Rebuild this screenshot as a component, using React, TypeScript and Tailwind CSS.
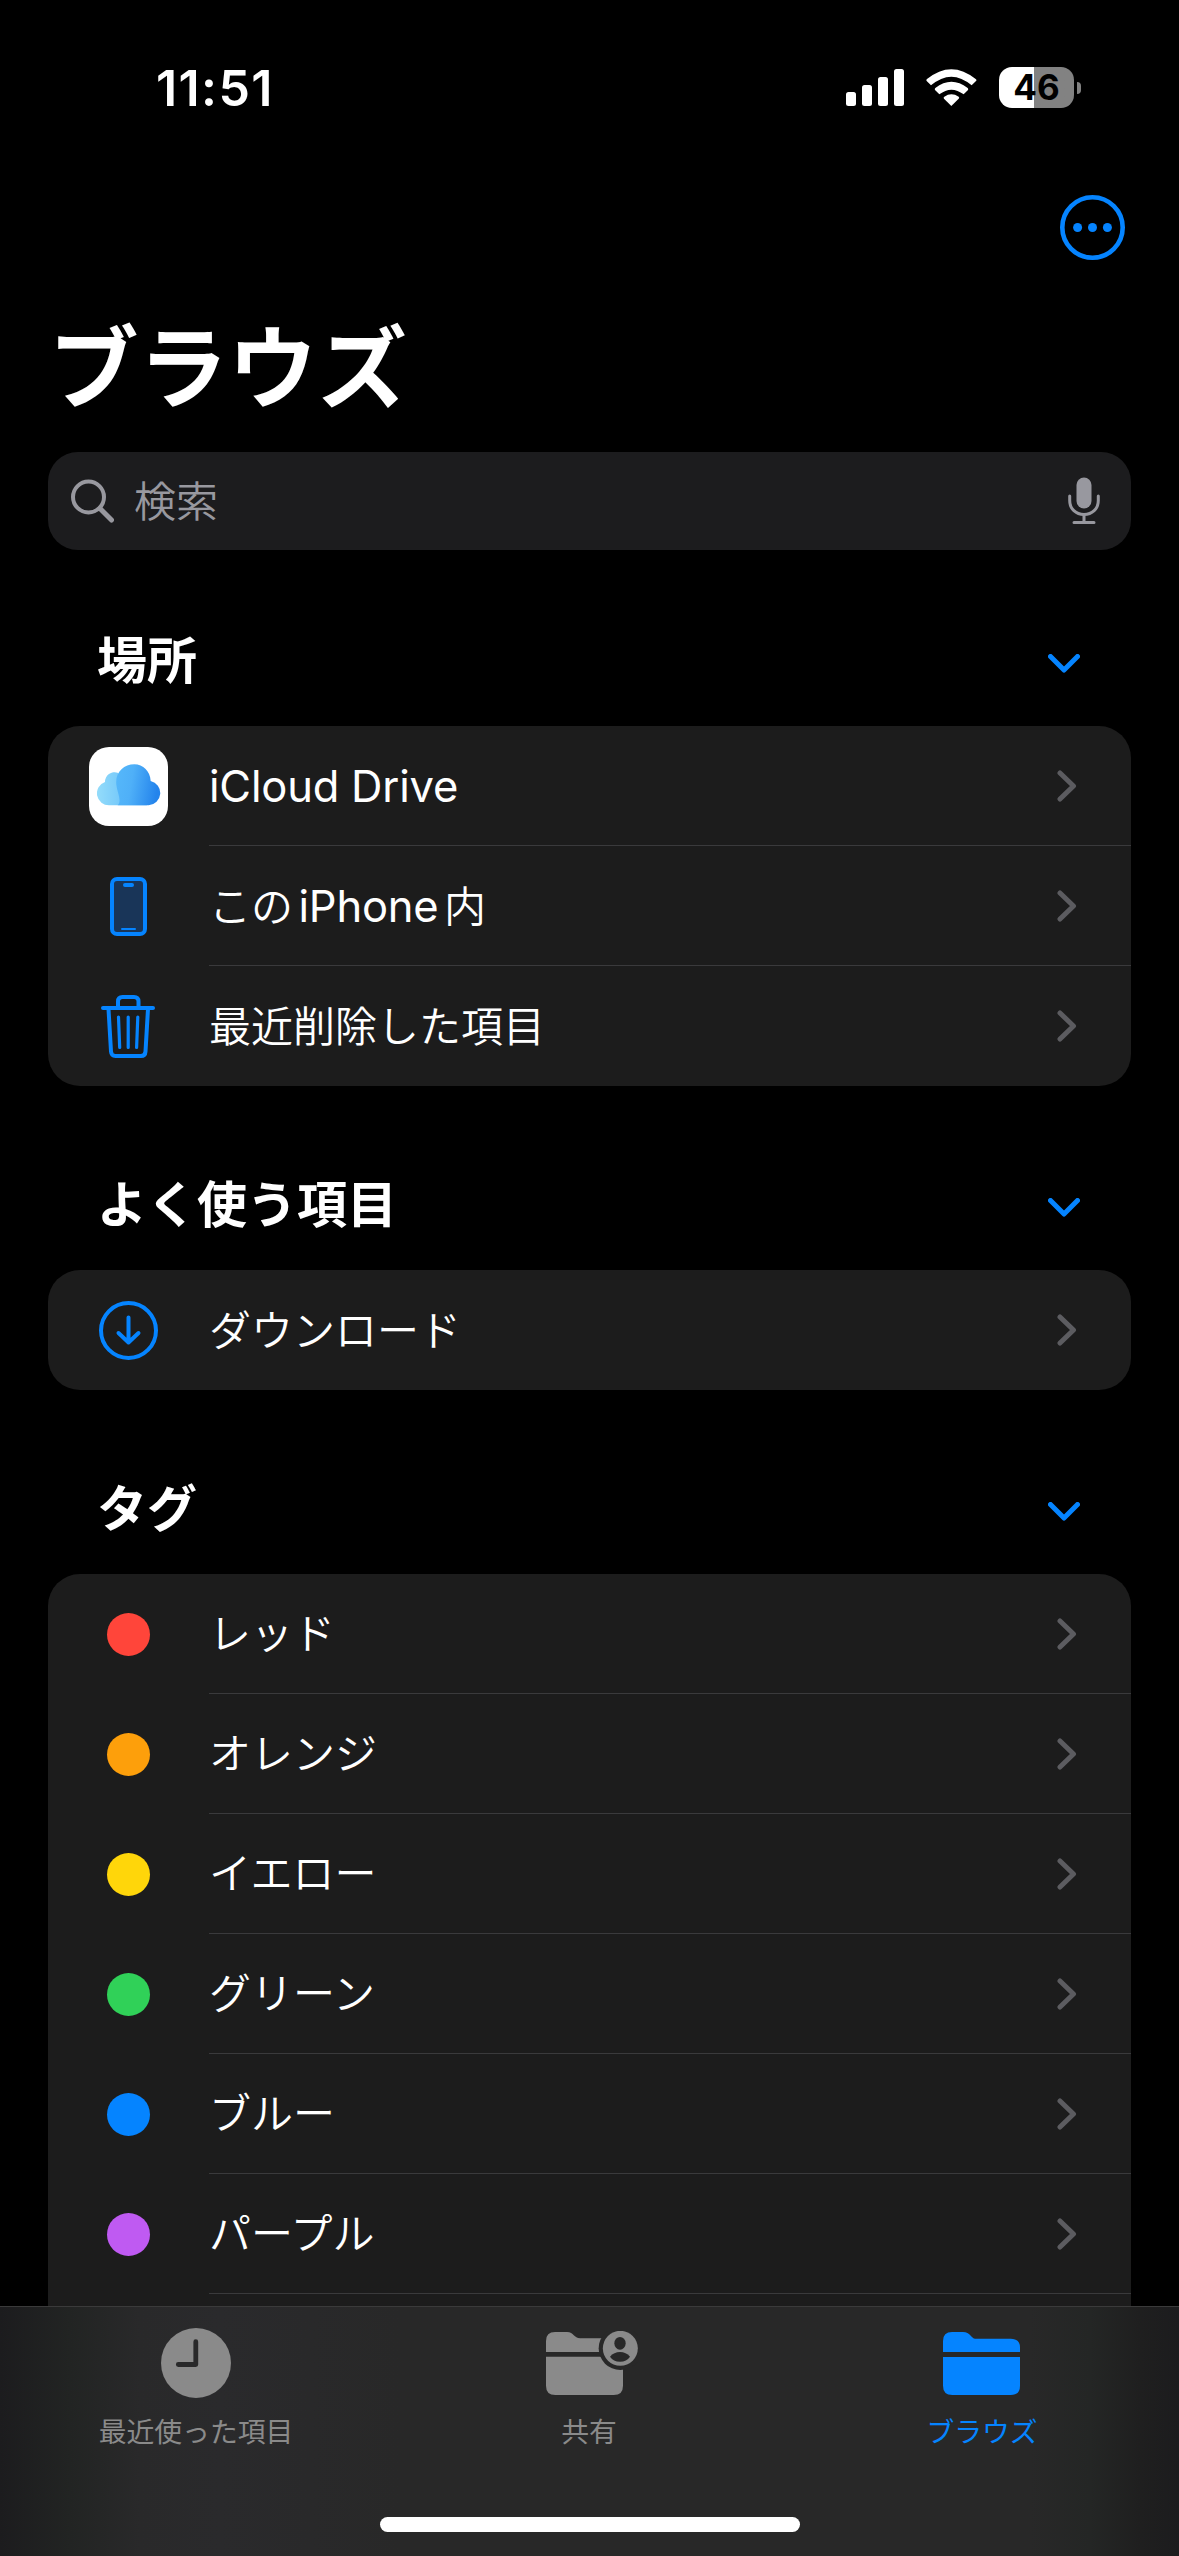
import type { ReactNode } from "react";

type Row = {
  label: ReactNode;
  icon: ReactNode;
};

const ICloudIcon = () => (
  <div className="flex size-[79px] items-center justify-center rounded-[20px] bg-white">
    <svg width="64" height="42" viewBox="0 0 192 126" className="-mt-[2px]">
      <defs>
        <linearGradient id="cloud-back" x1="0" x2="1" y1="0" y2="0">
          <stop offset="0" stopColor="#94dcfa" />
          <stop offset="0.5" stopColor="#74c8fa" />
          <stop offset="1" stopColor="#50b0f8" />
        </linearGradient>
        <linearGradient id="cloud-front" x1="0" x2="1" y1="0" y2="0.15">
          <stop offset="0" stopColor="#56b8fa" />
          <stop offset="0.4" stopColor="#4fb0f8" />
          <stop offset="1" stopColor="#2484ec" />
        </linearGradient>
      </defs>
      <path
        d="M150 124H37a36 36 0 0 1-13-70A29 29 0 0 1 62 26Z"
        fill="url(#cloud-back)"
      />
      <path
        d="M62 124C76 110 60 84 58 62C54 26 80 1 112 1C138 1 160 22 161 51A37 37 0 0 1 155 124Z"
        fill="url(#cloud-front)"
      />
    </svg>
  </div>
);

const PhoneIcon = () => (
  <svg width="37" height="59" viewBox="0 0 37 59" fill="none">
    <rect x="2" y="2" width="33" height="55" rx="5" fill="#193558" stroke="#0584ff" strokeWidth="4" />
    <rect x="13" y="6" width="11" height="4" rx="2" fill="#0584ff" />
    <rect x="11" y="51" width="15" height="2" rx="1" fill="#0584ff" />
  </svg>
);

const TrashIcon = () => (
  <svg
    width="54"
    height="63"
    viewBox="0 0 54 63"
    fill="none"
    stroke="#0584ff"
    strokeWidth="4"
    strokeLinecap="round"
    className="mr-px"
  >
    <path d="M2 13H52" />
    <path d="M17 12V6.500Q17 2 21.500 2H33Q37.500 2 37.500 6.500V12" />
    <path d="M7.500 14L10 56.500Q10.300 61 14.500 61H40Q44.200 61 44.500 56.500L47 14" />
    <path d="M17.500 22L18.700 52.500M27.200 22V52.500M36.800 22L35.600 52.500" strokeWidth="3.200" />
  </svg>
);

const DownloadIcon = () => (
  <svg
    width="59"
    height="59"
    viewBox="0 0 59 59"
    fill="none"
    stroke="#0584ff"
    strokeWidth="4"
    strokeLinecap="round"
    strokeLinejoin="round"
  >
    <circle cx="29.500" cy="29.500" r="27.500" />
    <path d="M29.500 16.500V41.500M19.500 32L29.500 41.500L39.500 32" />
  </svg>
);

const Dot = ({ color }: { color: string }) => (
  <div className={`size-[43px] rounded-full ${color}`} />
);

const ChevronRight = () => (
  <svg width="20" height="32" viewBox="0 0 20 32" fill="none">
    <path
      d="M3 3L16.500 16L3 29"
      stroke="#5c5c60"
      strokeWidth="5"
      strokeLinecap="round"
      strokeLinejoin="round"
    />
  </svg>
);

const ChevronDown = () => (
  <svg width="32" height="19" viewBox="0 0 32 19" fill="none">
    <path
      d="M2.500 2.500L16 16L29.500 2.500"
      stroke="#0584ff"
      strokeWidth="5"
      strokeLinecap="round"
      strokeLinejoin="round"
    />
  </svg>
);

const StatusBar = () => (
  <header className="flex h-[176px] shrink-0 items-start justify-between pl-[156px] pr-[98px]">
    <div className="mt-[58px] text-[50px] font-semibold leading-[60px] tracking-[1.4px]">
      11:51
    </div>
    <div className="mt-[67px] flex h-[41px] items-center">
      <svg width="58" height="37" viewBox="0 0 58 37" fill="#fff">
        <rect x="0" y="23" width="10" height="14" rx="2.500" />
        <rect x="16" y="16" width="10" height="21" rx="2.500" />
        <rect x="32" y="8" width="10" height="29" rx="2.500" />
        <rect x="48" y="0" width="10" height="37" rx="2.500" />
      </svg>
      <svg width="51" height="37" viewBox="0 0 153 111" fill="#fff" className="ml-[22px]">
        <path d="M76 111L54 89Q51 86 55 83Q76 69 98 83Q101 86 98 89Z" />
        <path d="M40 76L27 63Q25 60 28 57Q76 20 125 57Q128 60 126 63L113 76Q76 48 40 76Z" />
        <path d="M15 49L2 36Q0 33 3 30Q76 -29 149 30Q153 33 150 36L137 49Q76 -3 15 49Z" />
      </svg>
      <div className="ml-[22px] flex h-[41px] w-[75px] items-center justify-center rounded-[13px] bg-linear-to-r from-white from-47% to-[#828282] to-47% text-[35px] font-bold text-black">
        46
      </div>
      <div className="ml-[3px] h-3 w-1 rounded-r-full bg-[#828282]" />
    </div>
  </header>
);

const MoreButton = () => (
  <svg width="65" height="65" viewBox="0 0 65 65" fill="#0584ff">
    <circle cx="32.500" cy="32.500" r="30.200" fill="none" stroke="#0584ff" strokeWidth="4.600" />
    <circle cx="17.600" cy="32.500" r="4.500" />
    <circle cx="32.500" cy="32.500" r="4.500" />
    <circle cx="47.400" cy="32.500" r="4.500" />
  </svg>
);

const SearchBar = () => (
  <div className="mx-12 flex h-[98px] shrink-0 items-center rounded-[30px] bg-[#1c1c1e] pl-[23px] pr-[31px] text-[#98989f]">
    <svg
      width="43"
      height="44"
      viewBox="0 0 43 44"
      fill="none"
      stroke="currentColor"
      strokeWidth="4"
      className="-mt-px"
    >
      <circle cx="17.500" cy="18" r="15.500" />
      <path d="M29 29.500L40.500 41" strokeWidth="5" strokeLinecap="round" />
    </svg>
    <span className="ml-[20px] mt-[2px] text-[42px] font-[350] leading-none">検索</span>
    <svg
      width="32"
      height="48"
      viewBox="0 0 32 48"
      fill="none"
      stroke="currentColor"
      strokeWidth="3"
      strokeLinecap="round"
      className="ml-auto"
    >
      <rect x="8.500" y="0.500" width="15" height="31" rx="7.500" fill="currentColor" stroke="none" />
      <path d="M1.700 19V23.500C1.700 32 8 37.500 16 37.500S30.300 32 30.300 23.500V19" />
      <path d="M16 38V45.500M6 45.500H26" />
    </svg>
  </div>
);

type SectionProps = {
  title: string;
  rows: Row[];
  // the list runs on under the tab bar, so it has no bottom edge of its own
  openEnd?: boolean;
};

const Section = ({ title, rows, openEnd = false }: SectionProps) => (
  <section className="mx-12 shrink-0">
    <div className="flex h-[184px] items-end justify-between pb-[35px] pl-[49px] pr-[51px]">
      <h2 className="text-[50px] font-bold leading-[60px]">{title}</h2>
      <div className="pb-[18px]">
        <ChevronDown />
      </div>
    </div>
    <ul
      className={`overflow-hidden bg-[#1c1c1c] ${
        openEnd ? "rounded-t-[32px] pb-12" : "rounded-[32px]"
      }`}
    >
      {rows.map((row, i) => (
        <li key={i} className="flex h-[120px] items-center">
          <div className="flex w-[161px] shrink-0 items-center justify-center">{row.icon}</div>
          <div
            className={`flex h-full flex-1 items-center justify-between pr-[54px] ${
              i === rows.length - 1 && !openEnd ? "" : "border-b border-[#3a3a3c]"
            }`}
          >
            <span className="mt-px text-[42px] font-[350] leading-[60px]">{row.label}</span>
            <ChevronRight />
          </div>
        </li>
      ))}
    </ul>
  </section>
);

const ClockIcon = () => (
  <svg width="70" height="70" viewBox="0 0 70 70" fill="none">
    <circle cx="35" cy="35" r="35" fill="#8a8a8a" />
    <path
      d="M34.800 13.700V36.500H17.300"
      stroke="#29292a"
      strokeWidth="4.800"
      strokeLinecap="round"
      strokeLinejoin="round"
    />
  </svg>
);

const SharedFolderIcon = () => (
  <svg width="92" height="64" viewBox="0 0 276 192">
    <path
      d="M0 63V30Q0 3 27 3H63C84 3 83 22 103 22H205Q231 22 231 48V63ZM0 77H231V164Q231 192 203 192H28Q0 192 0 164Z"
      fill="#8a8a8a"
    />
    <circle cx="223" cy="52" r="65" fill="#282828" />
    <circle cx="223" cy="52" r="52.500" fill="#8a8a8a" />
    <ellipse cx="222" cy="37" rx="17" ry="19" fill="#282828" />
    <path d="M192 77Q204 63 222 63T252 77Q242 92 222 92T192 77Z" fill="#282828" />
  </svg>
);

const FolderIcon = () => (
  <svg width="77" height="63" viewBox="0 0 231 189" fill="#0584ff">
    <path d="M0 60V27Q0 0 27 0H60C82 0 84 20 97 20H203Q231 20 231 46V60Z" />
    <path d="M0 75H231V161Q231 189 203 189H28Q0 189 0 161Z" />
  </svg>
);

const tabs = [
  { label: "最近使った項目", icon: <ClockIcon />, offset: "pr-[2px]", color: "text-[#8a8a8a]" },
  { label: "共有", icon: <SharedFolderIcon />, offset: "pl-[4px] pb-px", color: "text-[#8a8a8a]" },
  { label: "ブラウズ", icon: <FolderIcon />, offset: "pr-[2px]", color: "text-[#0584ff]" },
];

const TabBar = () => (
  <nav className="flex h-[250px] shrink-0 flex-col justify-between border-t border-[#3a3a3a] bg-[linear-gradient(to_right,#1c1c1e,#222423_70px,#29292a_140px,#2a2a2c_220px,#282828_400px,#282828_1030px,#242625_1090px,#1f1f1f_1140px,#1c1c1e)] pb-6">
    <div className="grid grid-cols-3">
      {tabs.map((tab) => (
        <div key={tab.label} className={`flex flex-col items-center ${tab.color}`}>
          <div className={`mt-[21px] flex h-[70px] items-center ${tab.offset}`}>{tab.icon}</div>
          <span className="mt-[14px] pr-px text-[27.8px] leading-10">{tab.label}</span>
        </div>
      ))}
    </div>
    <div className="mx-auto h-[15px] w-[420px] rounded-full bg-white" />
  </nav>
);

const places: Row[] = [
  {
    label: <span className="text-[43.5px] font-normal tracking-[-0.2px]">iCloud Drive</span>,
    icon: <ICloudIcon />,
  },
  {
    label: (
      <>
        この
        <span className="mx-[5.500px] text-[43.5px] font-normal tracking-[-0.2px]">iPhone</span>内
      </>
    ),
    icon: <PhoneIcon />,
  },
  { label: "最近削除した項目", icon: <TrashIcon /> },
];

const favorites: Row[] = [{ label: "ダウンロード", icon: <DownloadIcon /> }];

const tags: Row[] = [
  { label: "レッド", icon: <Dot color="bg-[#ff453a]" /> },
  { label: "オレンジ", icon: <Dot color="bg-[#fd9f0b]" /> },
  { label: "イエロー", icon: <Dot color="bg-[#ffd60a]" /> },
  { label: "グリーン", icon: <Dot color="bg-[#30d158]" /> },
  { label: "ブルー", icon: <Dot color="bg-[#0584ff]" /> },
  { label: "パープル", icon: <Dot color="bg-[#bf5af2]" /> },
];

const App = () => {
  return (
    <div
      lang="ja"
      className="flex h-[2556px] w-[1179px] flex-col overflow-hidden bg-black font-['Inter','Noto_Sans_CJK_JP',sans-serif] text-white"
    >
      <StatusBar />
      <main className="flex min-h-0 flex-1 flex-col overflow-hidden">
        <div className="flex h-[103px] shrink-0 items-start justify-end pr-[54px] pt-[19px]">
          <MoreButton />
        </div>
        <h1 className="h-[173px] shrink-0 pl-[49px] pt-[30px] text-[89.5px] font-bold leading-[120px]">
          ブラウズ
        </h1>
        <SearchBar />
        <div className="-mt-2 flex flex-col">
          <Section title="場所" rows={places} />
          <Section title="よく使う項目" rows={favorites} />
          <Section title="タグ" rows={tags} openEnd />
        </div>
      </main>
      <TabBar />
    </div>
  );
};

export default App;
